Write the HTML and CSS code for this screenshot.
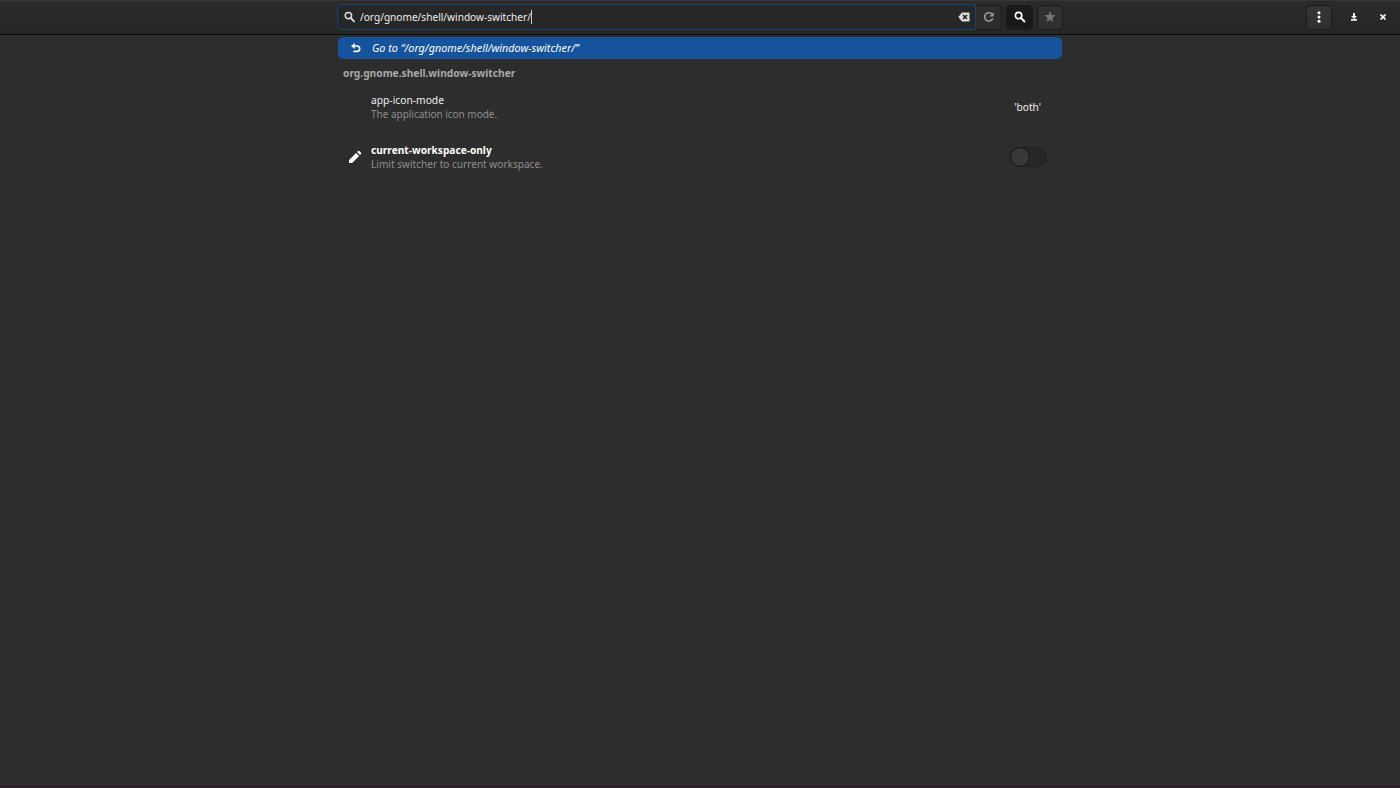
FILE: index.html
```html
<!DOCTYPE html>
<html lang="en">
<head>
<meta charset="utf-8">
<title>dconf Editor</title>
<link rel="stylesheet" href="styles.css">
</head>
<body>
<header class="headerbar">
  <div class="side"></div>
  <div class="center">
    <div class="entry">
      <svg class="search-icon" width="12" height="12" viewBox="0 0 12 12"><circle cx="4.4" cy="4.6" r="3.2" fill="none" stroke="#dedede" stroke-width="1.5"/><path d="M6.8 7l3.3 3.3" stroke="#dedede" stroke-width="1.8" stroke-linecap="round"/></svg>
      <span class="narrow path">/org/gnome/shell/window-switcher/</span><span class="caret"></span>
      <svg class="clear" width="12" height="10" viewBox="0 0 12 10"><path d="M4 .5h7.5v9H4L.3 5z" fill="#dcdcdc"/><path d="M5 3l4 4M9 3l-4 4" stroke="#222" stroke-width="1.6"/></svg>
    </div>
    <div class="btn reload"><svg width="12" height="12" viewBox="0 0 12 12"><path d="M9.8 7.4A4.2 4.2 0 1 1 8.8 2.9" fill="none" stroke="#989898" stroke-width="1.6"/><path d="M10.8 1v4.5H6.4z" fill="#989898"/></svg></div>
    <div class="btn active"><svg width="12" height="12" viewBox="0 0 12 12"><circle cx="4.6" cy="4.6" r="3.2" fill="none" stroke="#fff" stroke-width="1.6"/><path d="M7 7l3.5 3.5" stroke="#fff" stroke-width="1.9" stroke-linecap="round"/></svg></div>
    <div class="btn star"><svg width="12" height="12" viewBox="0 0 12 12"><path d="M6 .3l1.5 3.8 4.1.2-3.2 2.6 1.1 4L6 8.7l-3.5 2.2 1.1-4L.4 4.3l4.1-.2z" fill="#757575"/></svg></div>
  </div>
  <div class="side right">
    <div class="btn menu"><svg width="4" height="12" viewBox="0 0 4 12"><g fill="#fff"><circle cx="2" cy="1.7" r="1.5"/><circle cx="2" cy="6" r="1.5"/><circle cx="2" cy="10.3" r="1.5"/></g></svg></div>
    <svg class="minimize" width="8" height="8" viewBox="0 0 8 8"><path d="M3 0h2v3h2L4 6 1 3h2zM1 6h6v1.8H1z" fill="#eee"/></svg>
    <svg class="close" width="6" height="6" viewBox="0 0 6 6"><path d="M.5.5l5 5M5.5.5l-5 5" stroke="#eee" stroke-width="1.8"/></svg>
  </div>
</header>
<main class="results">
  <div class="goto">
    <svg width="10" height="10" viewBox="0 0 10 10"><path d="M2 3h4a2.7 2.7 0 0 1 0 5.4H2.4" fill="none" stroke="#fff" stroke-width="1.6"/><path d="M3.7 0v6L0 3z" fill="#fff"/></svg>
    <span class="narrow goto-text">Go to “/org/gnome/shell/window-switcher/”</span>
  </div>
  <div class="schema"><span class="narrow schema-text">org.gnome.shell.window-switcher</span></div>
  <div class="row">
    <div class="mark"></div>
    <div class="info"><div class="narrow key k1">app-icon-mode</div><div class="narrow desc d1">The application icon mode.</div></div>
    <div class="narrow value">'both'</div>
  </div>
  <div class="row">
    <div class="mark"><svg width="14" height="14" viewBox="0 0 14 14"><path d="M1 13v-3.1l7-7L11.1 6l-7 7zM9 2L10.1.9q.6-.5 1.2 0L13.1 2.7q.5.6 0 1.2L12 5z" fill="#fff"/></svg></div>
    <div class="info"><div class="narrow key bold">current-workspace-only</div><div class="narrow desc">Limit switcher to current workspace.</div></div>
    <div class="switch"><div class="knob"></div></div>
  </div>
</main>
<footer class="edge"></footer>
</body>
</html>
```
FILE: styles.css
```css
* { box-sizing: border-box; }
body {
  margin: 0;
  height: 788px;
  overflow: hidden;
  display: flex;
  flex-direction: column;
  background: #2d2d2d;
  color: #eee;
  font: 11px/14px "Noto Sans", sans-serif;
  white-space: nowrap;
}
svg { display: block; flex: none; }
.narrow {
  display: block;
  width: max-content;
  transform: scaleX(.922);
  transform-origin: left center;
}
.headerbar {
  height: 35px;
  flex: none;
  display: flex;
  align-items: center;
  padding-bottom: 1px;
  background: linear-gradient(#2b2b2b, #262626);
  border-top: 1px solid #363636;
  border-bottom: 1px solid #0b0b0b;
}
.side { flex: 1; }
.right { display: flex; align-items: center; justify-content: flex-end; }
.center { width: 726px; display: flex; align-items: center; }
.entry {
  width: 639px;
  height: 26px;
  display: flex;
  align-items: center;
  padding: 0 5px 0 6px;
  border: 1px solid #184474;
  border-radius: 4px 0 0 4px;
  background: #272727;
}
.search-icon { margin-right: 3.5px; }
.narrow.path { transform: scaleX(.918); }
.caret { width: 1px; height: 14px; margin-left: -15px; background: #ccc; }
.clear { margin-left: auto; }
.btn {
  width: 26px;
  height: 25px;
  display: flex;
  align-items: center;
  justify-content: center;
  border: 1px solid #1b1b1b;
  border-radius: 4px;
  background: linear-gradient(#343434, #303030);
}
.reload { width: 26px; border-left: 0; border-radius: 0 4px 4px 0; background: #2d2d2d; }
.reload svg { margin-left: 1px; }
.active { margin-left: 4px; width: 27px; background: #191919; }
.star { margin-left: 4px; background: #303030; }
.menu { margin-right: 18px; }
.minimize { margin-right: 22px; }
.close { margin-right: 14px; }
.results { width: 724px; margin: 2px auto 0; flex: 1; }
.goto {
  height: 22px;
  display: flex;
  align-items: center;
  padding-left: 13px;
  border-radius: 5px;
  background: #15539e;
  color: #fff;
  font-style: italic;
}
.goto-text { margin-left: 10.5px; }
.narrow.goto-text { transform: scaleX(.98); }
.schema {
  height: 23px;
  padding: 7px 0 0 5px;
  color: #a9a9a9;
  font-weight: 700;
}
.narrow.schema-text { transform: scaleX(.928); }
.row { height: 50px; display: flex; align-items: center; padding-right: 15px; }
.mark { width: 33px; padding-left: 10px; }
.info { flex: 1; }
.bold { font-weight: 700; color: #fff; }
.desc { color: #8e8e8e; }
.narrow.k1 { transform: scaleX(.932); }
.narrow.desc { transform: scaleX(.916); }
.narrow.d1 { transform: scaleX(.906); }
.narrow.value { margin-right: 6px; transform-origin: right center; }
.switch {
  width: 37px;
  height: 20px;
  border: 1px solid #202020;
  border-radius: 10px;
  background: #272727;
}
.knob {
  width: 20px;
  height: 20px;
  margin: -1px;
  border: 1px solid #161616;
  border-radius: 50%;
  background: #373737;
}
.edge { height: 3px; flex: none; background: #2b2129; }
```
